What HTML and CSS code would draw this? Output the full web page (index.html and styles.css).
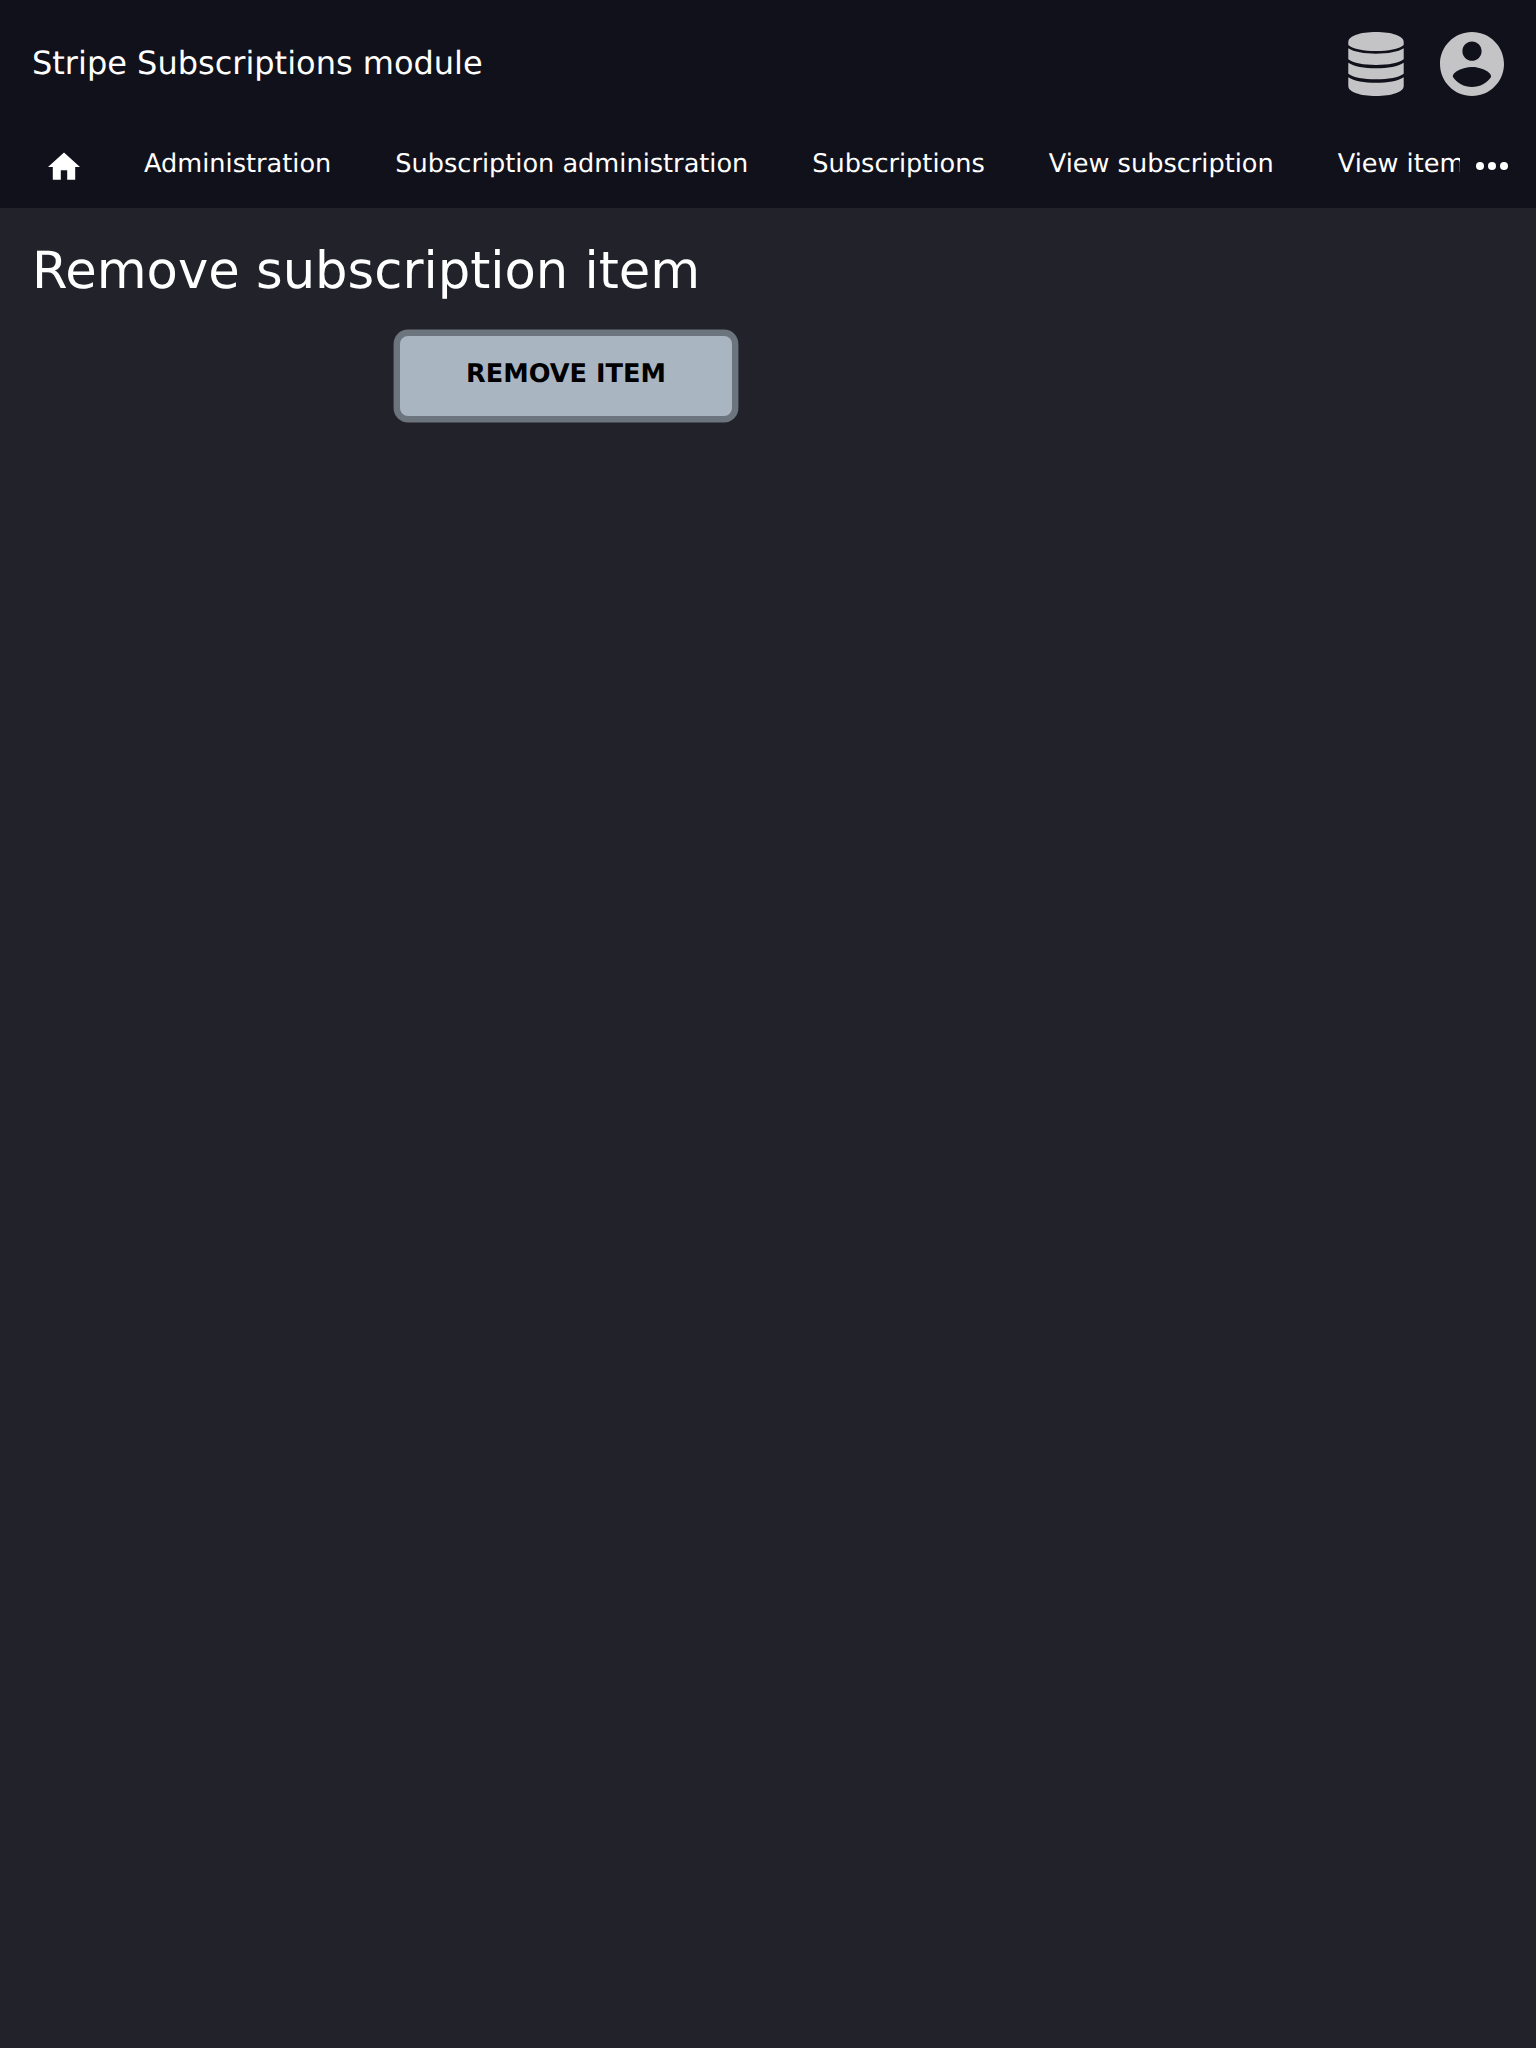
FILE: index.html
```html
<!DOCTYPE html>
<html lang="en">
<head>
<meta charset="utf-8">
<title>Remove subscription item</title>
<link rel="stylesheet" href="styles.css">
</head>
<body>
<header class="header">
  <div class="topbar">
    <div class="brand">Stripe Subscriptions module</div>
    <div class="account-menus">
      <svg class="icon-database" viewBox="0 0 56 64" aria-hidden="true">
        <path d="M0.300 10C0.300 4 12 0 28 0s27.700 4 27.700 10v3C51 17 40 19 28 19S5 17 0.300 13z"/>
        <path d="M0.300 16.300C6 20 16 21.700 28 21.700S50 20 55.700 16.300V27.300C51 31 40 33 28 33S5 31 0.300 27.300z"/>
        <path d="M0.300 30.700C6 34.500 16 36.300 28 36.300S50 34.500 55.700 30.700V41.700C51 45.500 40 47.300 28 47.300S5 45.500 0.300 41.700z"/>
        <path d="M0.300 45.200C6 49 16 50.700 28 50.700S50 49 55.700 45.200V54C55.700 60 44 64 28 64S0.300 60 0.300 54z"/>
      </svg>
      <svg class="icon-account" viewBox="2 2 20 20" aria-hidden="true">
        <path d="M12 2C6.480 2 2 6.480 2 12s4.480 10 10 10 10-4.480 10-10S17.520 2 12 2zm0 3c1.660 0 3 1.340 3 3s-1.340 3-3 3-3-1.340-3-3 1.340-3 3-3zm0 14.200c-2.500 0-4.710-1.280-6-3.220.030-1.990 4-3.080 6-3.080 1.990 0 5.970 1.090 6 3.080-1.290 1.940-3.500 3.220-6 3.220z"/>
      </svg>
    </div>
  </div>
  <nav class="navbar">
    <div class="links">
      <a class="home"><svg class="icon-home" viewBox="0 0 32 28" aria-hidden="true"><path d="M12.800 27.800v-9.600h6.400v9.600h8V15H32L16 .6 0 15h4.800v12.800z"/></svg></a>
      <a>Administration</a>
      <a>Subscription administration</a>
      <a>Subscriptions</a>
      <a>View subscription</a>
      <a>View item</a>
    </div>
    <svg class="icon-more" viewBox="0 0 32 8" aria-hidden="true"><circle cx="4" cy="4" r="4"/><circle cx="16" cy="4" r="4"/><circle cx="28" cy="4" r="4"/></svg>
  </nav>
</header>
<main class="content">
  <h1>Remove subscription item</h1>
  <form class="form"><button class="submit" type="button">REMOVE ITEM</button></form>
</main>
</body>
</html>
```
FILE: styles.css
```css
* { box-sizing: border-box; }
body { margin: 0; min-height: 2048px; background: #22222b; color: #fff; font-family: "DejaVu Sans", sans-serif; text-rendering: geometricPrecision; }
.header { height: 208px; background: #11111b; }
.topbar { height: 128px; padding: 0 32px; display: flex; align-items: center; justify-content: space-between; }
.brand { padding-bottom: 2px; font-size: 32px; line-height: 48px; }
.account-menus { display: flex; align-items: center; gap: 36px; fill: #c4c4c6; }
.icon-database { width: 56px; height: 64px; }
.icon-account { width: 64px; height: 64px; }
.navbar { height: 80px; display: flex; }
.links { width: 1460px; height: 80px; display: flex; overflow: hidden; white-space: nowrap; }
.links a { flex: none; padding: 17px 32px; font-size: 25.600px; line-height: 38px; }
.links .home { width: 112px; padding: 24px 0 0 48px; line-height: 0; }
.icon-home { display: block; width: 32px; height: 28px; fill: #fff; }
.icon-more { width: 32px; height: 8px; margin: 34px 0 0 16px; fill: #fff; }
.content { padding: 33px 32px; }
h1 { margin: 0; font-size: 51.200px; line-height: 61px; font-weight: 400; }
.form { padding: 34px 0 0 368px; display: flex; }
.submit { width: 332px; height: 80px; padding: 0 0 4px; border: 0; border-radius: 8px; box-shadow: 0 0 0 6.400px #6c757d; background: #a9b5c1; color: #000; font: bold 25.600px/38px "DejaVu Sans", sans-serif; text-rendering: geometricPrecision; }
```
